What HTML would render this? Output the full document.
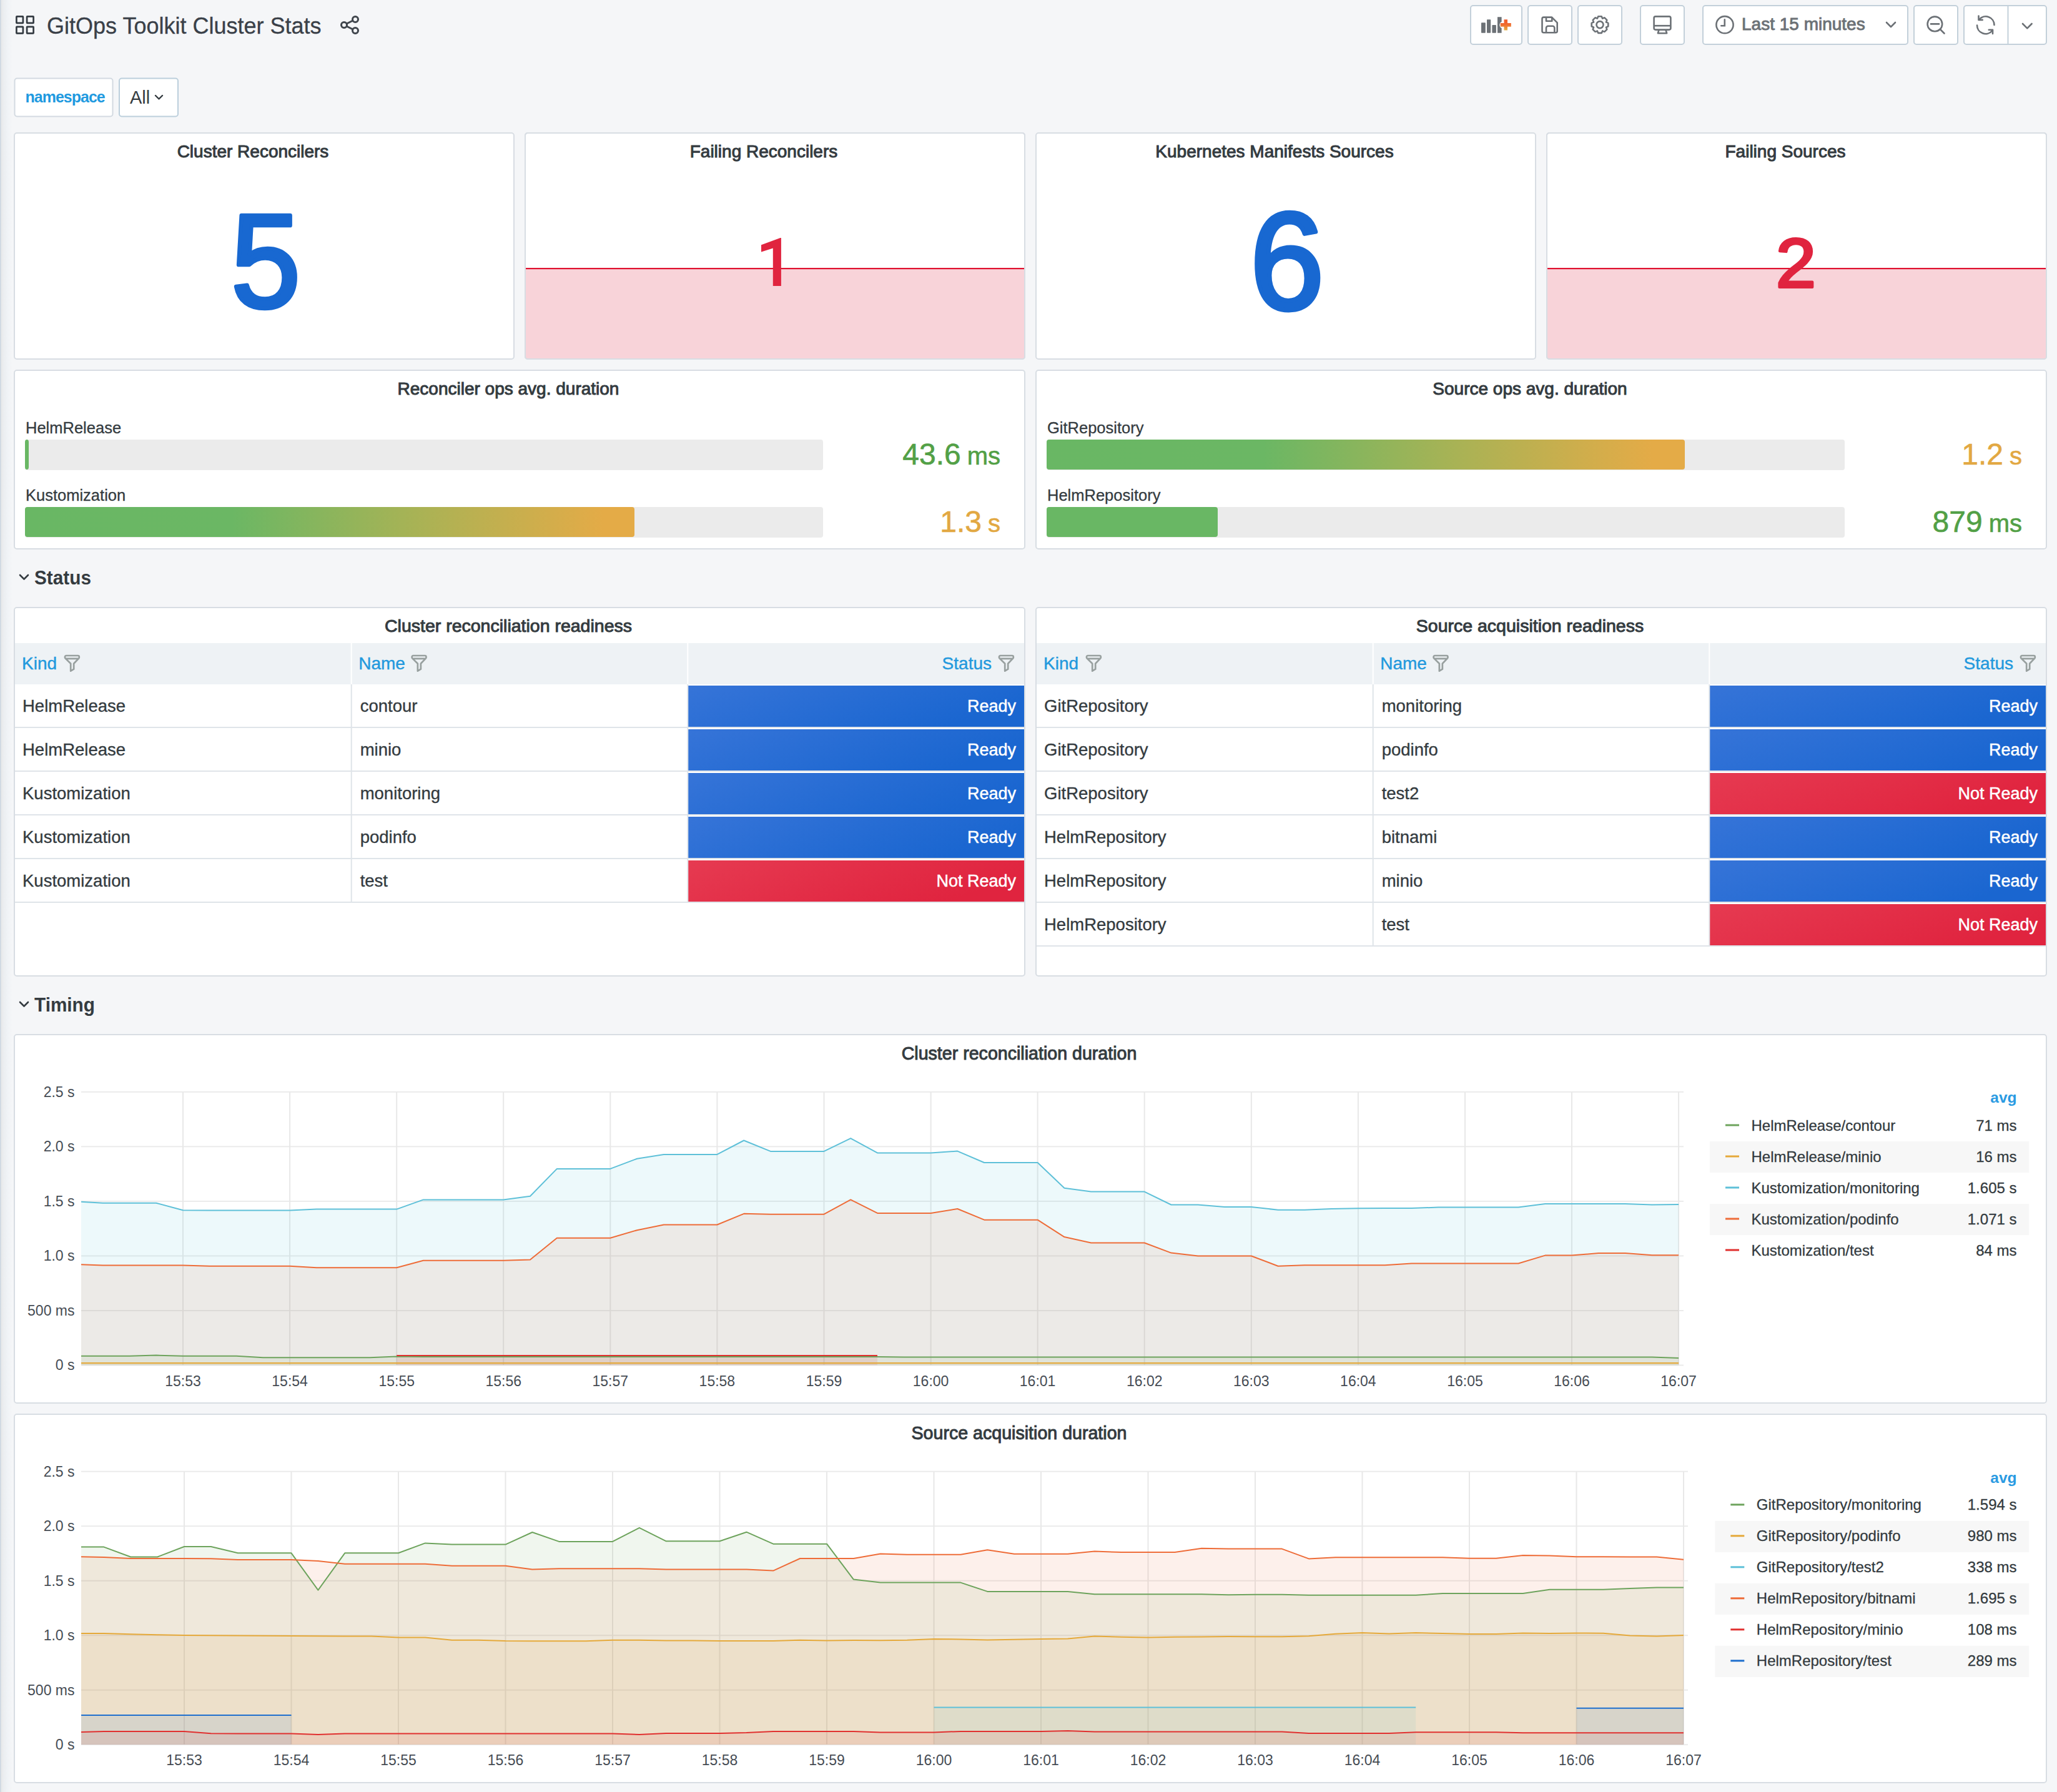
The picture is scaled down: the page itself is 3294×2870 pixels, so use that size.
<!DOCTYPE html>
<html><head><meta charset="utf-8"><style>
html,body{margin:0;padding:0;background:#f5f6f8;width:3294px;height:2870px;overflow:hidden}
svg{display:block}
text{font-family:"Liberation Sans", sans-serif}
</style></head><body>
<svg width="3294" height="2870" viewBox="0 0 3294 2870">
<defs><linearGradient id="lshadow" x1="0" x2="1" y1="0" y2="0"><stop offset="0" stop-color="#c9d4df"/><stop offset="0.07" stop-color="#d5dde5"/><stop offset="0.12" stop-color="#e8e9ea"/><stop offset="0.3" stop-color="#ebeef1"/><stop offset="0.6" stop-color="#f0f3f6"/><stop offset="1" stop-color="#f5f6f8"/></linearGradient><linearGradient id="plusg" x1="0" x2="0" y1="0" y2="1"><stop offset="0" stop-color="#f05a28"/><stop offset="0.45" stop-color="#f0692f"/><stop offset="1" stop-color="#e6b040"/></linearGradient><linearGradient id="bgrad" x1="0" x2="1" y1="0" y2="0"><stop offset="0" stop-color="#69b764"/><stop offset="0.34" stop-color="#6bb764"/><stop offset="0.62" stop-color="#a4b356"/><stop offset="0.95" stop-color="#e4ab47"/><stop offset="1" stop-color="#e4ab47"/></linearGradient><linearGradient id="cblue" x1="0" x2="1" y1="0" y2="0.35"><stop offset="0" stop-color="#3674d8"/><stop offset="1" stop-color="#1a66d0"/></linearGradient><linearGradient id="cred" x1="0" x2="1" y1="0" y2="0.35"><stop offset="0" stop-color="#e63a51"/><stop offset="1" stop-color="#e0243f"/></linearGradient><clipPath id="clip0"><rect x="130" y="1742.8" width="2559" height="443.70000000000005"/></clipPath><clipPath id="clip1"><rect x="130" y="2350.7" width="2566" height="443.5"/></clipPath></defs>
<rect width="3294" height="2870" fill="#f5f6f8"/>
<rect x="0" y="0" width="20" height="2870" fill="url(#lshadow)"/>
<rect x="26.4" y="26.4" width="10.5" height="10.5" fill="none" stroke="#343b42" stroke-width="2.7" rx="0.6"/>
<rect x="43.1" y="26.4" width="10.5" height="10.5" fill="none" stroke="#343b42" stroke-width="2.7" rx="0.6"/>
<rect x="26.4" y="42.8" width="10.5" height="10.5" fill="none" stroke="#343b42" stroke-width="2.7" rx="0.6"/>
<rect x="43.1" y="42.8" width="10.5" height="10.5" fill="none" stroke="#343b42" stroke-width="2.7" rx="0.6"/>
<text x="75" y="54" font-size="36" fill="#3a4048" stroke="#3a4048" stroke-width="0.3">GitOps Toolkit Cluster Stats</text>
<g fill="none" stroke="#3f454c" stroke-width="3"><circle cx="569" cy="31" r="4.5"/><circle cx="551" cy="40" r="4.5"/><circle cx="569" cy="49" r="4.5"/><line x1="555" y1="38" x2="565" y2="33"/><line x1="555" y1="42" x2="565" y2="47"/></g>
<rect x="2355" y="9" width="82" height="62" fill="#ffffff" stroke="#c3d0da" stroke-width="2" rx="4"/>
<rect x="2447" y="9" width="70" height="62" fill="#ffffff" stroke="#c3d0da" stroke-width="2" rx="4"/>
<rect x="2527" y="9" width="70" height="62" fill="#ffffff" stroke="#c3d0da" stroke-width="2" rx="4"/>
<rect x="2627" y="9" width="70" height="62" fill="#ffffff" stroke="#c3d0da" stroke-width="2" rx="4"/>
<rect x="2727" y="9" width="328" height="62" fill="#ffffff" stroke="#c3d0da" stroke-width="2" rx="4"/>
<rect x="3065" y="9" width="70" height="62" fill="#ffffff" stroke="#c3d0da" stroke-width="2" rx="4"/>
<rect x="3145" y="9" width="132" height="62" fill="#ffffff" stroke="#c3d0da" stroke-width="2" rx="4"/>
<line x1="3215.5" y1="9" x2="3215.5" y2="71" stroke="#c3d0da" stroke-width="2"/>
<g fill="#6c7176"><rect x="2372" y="36.2" width="6.8" height="16.5" rx="0.8"/><rect x="2381" y="31.2" width="6.2" height="21.5" rx="0.8"/><rect x="2389.4" y="40.1" width="6.5" height="12.6" rx="0.8"/><path d="M2398 27.2 h6.6 v7.8 a5.5 5.5 0 0 0 0 10 v7.7 h-6.6 z"/></g>
<path fill="url(#plusg)" d="M2408.5 31.2 h5.5 v5.9 h5.8 v5.6 h-5.8 v5.9 h-5.5 v-5.9 h-5.8 v-5.6 h5.8 z"/>
<g fill="none" stroke="#6c7176" stroke-width="2.6" stroke-linejoin="round"><path d="M2472 27.6 h13 l8.7 8.7 v13.5 a2.5 2.5 0 0 1 -2.5 2.5 h-19.2 a2.5 2.5 0 0 1 -2.5 -2.5 v-19.7 a2.5 2.5 0 0 1 2.5 -2.5 z"/><path d="M2476 27.6 v6.2 h9.3 v-6.2"/><path d="M2476 52.3 v-7.5 a3 3 0 0 1 3 -3 h7.3 a3 3 0 0 1 3 3 v7.5"/></g>
<path d="M2557.8 29.7 L2559.3 26.3 L2564.7 26.3 L2566.2 29.7 L2566.1 29.6 L2569.5 28.3 L2573.3 32.1 L2572.0 35.5 L2571.9 35.4 L2575.3 36.9 L2575.3 42.3 L2571.9 43.8 L2572.0 43.7 L2573.3 47.1 L2569.5 50.9 L2566.1 49.6 L2566.2 49.5 L2564.7 52.9 L2559.3 52.9 L2557.8 49.5 L2557.9 49.6 L2554.5 50.9 L2550.7 47.1 L2552.0 43.7 L2552.1 43.8 L2548.7 42.3 L2548.7 36.9 L2552.1 35.4 L2552.0 35.5 L2550.7 32.1 L2554.5 28.3 L2557.9 29.6 Z" fill="none" stroke="#6c7176" stroke-width="2.6" stroke-linejoin="round"/>
<circle cx="2562" cy="39.6" r="5.5" fill="none" stroke="#6c7176" stroke-width="2.6"/>
<g fill="none" stroke="#6c7176" stroke-width="2.6" stroke-linejoin="round"><rect x="2648.6" y="26.4" width="26.8" height="21.2" rx="2.5"/><line x1="2648.6" y1="41.2" x2="2675.4" y2="41.2"/><path d="M2656.5 48 l-1.6 5.2 h14.2 l-1.6 -5.2"/></g>
<g fill="none" stroke="#6c7176" stroke-width="2.6"><circle cx="2762" cy="39.7" r="13.6"/><path d="M2761.8 31.3 v9.9 h-5.5" stroke-linecap="round"/></g>
<text x="2789" y="48" font-size="28" fill="#6c7176" stroke="#6c7176" stroke-width="0.9">Last 15 minutes</text>
<path d="M3021 36 l7 7 l7 -7" fill="none" stroke="#6c7176" stroke-width="2.6" stroke-linecap="round" stroke-linejoin="round"/>
<g fill="none" stroke="#6c7176" stroke-width="2.6" stroke-linecap="round"><circle cx="3098.4" cy="38.4" r="11.8"/><line x1="3107" y1="47" x2="3113.5" y2="53.5"/><line x1="3092" y1="38.4" x2="3105" y2="38.4"/></g>
<g fill="none" stroke="#6c7176" stroke-width="2.6" stroke-linecap="round" stroke-linejoin="round"><path d="M3193.5 40 a13.6 13.6 0 0 0 -24 -8.8"/><path d="M3166 40.5 a13.6 13.6 0 0 0 24 8.8"/><path d="M3168.5 25.6 v6.3 h6.2"/><path d="M3191 54 v-6.3 h-6.2"/></g>
<path d="M3239 38 l7.3 7.3 l7.3 -7.3" fill="none" stroke="#6c7176" stroke-width="2.6" stroke-linecap="round" stroke-linejoin="round"/>
<rect x="23.5" y="125.5" width="157" height="61" fill="#ffffff" stroke="#d3dae1" stroke-width="2" rx="4"/>
<text x="40.5" y="164" font-size="25" fill="#1f9ae0" font-weight="700" letter-spacing="-1">namespace</text>
<rect x="191" y="125.5" width="94" height="61" fill="#ffffff" stroke="#bccfdc" stroke-width="2" rx="4"/>
<text x="208" y="166" font-size="29" fill="#343b40">All</text>
<path d="M249 153 l5.5 5.5 l5.5 -5.5" fill="none" stroke="#343b40" stroke-width="2.4" stroke-linecap="round" stroke-linejoin="round"/>
<rect x="23" y="213" width="800" height="362" fill="#ffffff" stroke="#d8dde3" stroke-width="2" rx="4"/>
<rect x="841" y="213" width="800" height="362" fill="#ffffff" stroke="#d8dde3" stroke-width="2" rx="4"/>
<rect x="1659" y="213" width="800" height="362" fill="#ffffff" stroke="#d8dde3" stroke-width="2" rx="4"/>
<rect x="2477" y="213" width="800" height="362" fill="#ffffff" stroke="#d8dde3" stroke-width="2" rx="4"/>
<rect x="842" y="430" width="798" height="144" fill="#f8d3d9"/>
<rect x="842" y="429" width="798" height="2.2" fill="#e0102f"/>
<rect x="841" y="213" width="800" height="362" fill="none" stroke="#d8dde3" stroke-width="2" rx="4"/>
<rect x="2478" y="430" width="798" height="144" fill="#f8d3d9"/>
<rect x="2478" y="429" width="798" height="2.2" fill="#e0102f"/>
<rect x="2477" y="213" width="800" height="362" fill="none" stroke="#d8dde3" stroke-width="2" rx="4"/>
<text x="405.0" y="252" font-size="28" fill="#343b40" text-anchor="middle" stroke="#343b40" stroke-width="1.0">Cluster Reconcilers</text>
<text x="1223.0" y="252" font-size="28" fill="#343b40" text-anchor="middle" stroke="#343b40" stroke-width="1.0">Failing Reconcilers</text>
<text x="2041.0" y="252" font-size="28" fill="#343b40" text-anchor="middle" stroke="#343b40" stroke-width="1.0">Kubernetes Manifests Sources</text>
<text x="2859.0" y="252" font-size="28" fill="#343b40" text-anchor="middle" stroke="#343b40" stroke-width="1.0">Failing Sources</text>
<text transform="translate(425.5,492) scale(0.965,1.035)" x="0" y="0" font-size="207" fill="#1868d1" stroke="#1868d1" stroke-width="6.5" stroke-linejoin="round" text-anchor="middle">5</text>
<text transform="translate(2061,494.5) scale(1.03,1.065)" x="0" y="0" font-size="207" fill="#1868d1" stroke="#1868d1" stroke-width="6.5" stroke-linejoin="round" text-anchor="middle">6</text>
<polygon points="1250.9,381 1250.9,458 1237.8,458 1237.8,397.5 1219,403.5 1219,392.2 1249.5,381" fill="#e0243f"/>
<text transform="translate(2876,459.5) scale(1.08,1.04)" x="0" y="0" font-size="107" fill="#e0243f" stroke="#e0243f" stroke-width="4" stroke-linejoin="round" text-anchor="middle">2</text>
<rect x="23" y="593" width="1618" height="286" fill="#ffffff" stroke="#d8dde3" stroke-width="2" rx="4"/>
<rect x="1659" y="593" width="1618" height="286" fill="#ffffff" stroke="#d8dde3" stroke-width="2" rx="4"/>
<text x="814" y="632" font-size="28" fill="#343b40" text-anchor="middle" stroke="#343b40" stroke-width="1.0">Reconciler ops avg. duration</text>
<text x="2450" y="632" font-size="28" fill="#343b40" text-anchor="middle" stroke="#343b40" stroke-width="1.0">Source ops avg. duration</text>
<text x="41" y="694" font-size="25.5" fill="#343b40" stroke="#343b40" stroke-width="0.3">HelmRelease</text>
<rect x="40" y="704" width="1278" height="49" fill="#ebebeb" rx="4"/>
<rect x="40" y="704" width="6" height="48" fill="#69b764" rx="4"/>
<text x="1602" y="744" text-anchor="end" fill="#52a046" stroke="#52a046" stroke-width="0.6" font-size="48">43.6<tspan font-size="40" dx="10">ms</tspan></text>
<text x="41" y="802" font-size="25.5" fill="#343b40" stroke="#343b40" stroke-width="0.3">Kustomization</text>
<rect x="40" y="812" width="1278" height="49" fill="#ebebeb" rx="4"/>
<rect x="40" y="812" width="976" height="48" fill="url(#bgrad)" rx="4"/>
<text x="1602" y="852" text-anchor="end" fill="#e2a842" stroke="#e2a842" stroke-width="0.6" font-size="48">1.3<tspan font-size="40" dx="10">s</tspan></text>
<text x="1677" y="694" font-size="25.5" fill="#343b40" stroke="#343b40" stroke-width="0.3">GitRepository</text>
<rect x="1676" y="704" width="1278" height="49" fill="#ebebeb" rx="4"/>
<rect x="1676" y="704" width="1022" height="48" fill="url(#bgrad)" rx="4"/>
<text x="3238" y="744" text-anchor="end" fill="#e2a842" stroke="#e2a842" stroke-width="0.6" font-size="48">1.2<tspan font-size="40" dx="10">s</tspan></text>
<text x="1677" y="802" font-size="25.5" fill="#343b40" stroke="#343b40" stroke-width="0.3">HelmRepository</text>
<rect x="1676" y="812" width="1278" height="49" fill="#ebebeb" rx="4"/>
<rect x="1676" y="812" width="274" height="48" fill="#69b764" rx="4"/>
<text x="3238" y="852" text-anchor="end" fill="#52a046" stroke="#52a046" stroke-width="0.6" font-size="48">879<tspan font-size="40" dx="10">ms</tspan></text>
<rect x="23" y="973" width="1618" height="590" fill="#ffffff" stroke="#d8dde3" stroke-width="2" rx="4"/>
<text x="814" y="1012" font-size="28.5" fill="#343b40" text-anchor="middle" stroke="#343b40" stroke-width="1.0">Cluster reconciliation readiness</text>
<rect x="24" y="1030" width="1616" height="66" fill="#eef2f5"/>
<rect x="561.7" y="1030" width="2" height="66" fill="#ffffff"/>
<rect x="1100.3" y="1030" width="2" height="66" fill="#ffffff"/>
<text x="35" y="1072" font-size="28" fill="#2299dd" stroke="#2299dd" stroke-width="0.4">Kind</text>
<path transform="translate(103,1048.5)" d="M3 1.5 h18.8 a2 2 0 0 1 2 2 v1 a2 2 0 0 1 -0.6 1.4 l-8 8.3 v9 l-5 3 v-12 l-8.6 -8.3 a2 2 0 0 1 -0.6 -1.4 v-1 a2 2 0 0 1 2 -2 z M1.6 6.3 h22" fill="none" stroke="#98a09f" stroke-width="2.7" stroke-linejoin="round"/>
<text x="574.1666666666666" y="1072" font-size="28" fill="#2299dd" stroke="#2299dd" stroke-width="0.4">Name</text>
<path transform="translate(658.6666666666666,1048.5)" d="M3 1.5 h18.8 a2 2 0 0 1 2 2 v1 a2 2 0 0 1 -0.6 1.4 l-8 8.3 v9 l-5 3 v-12 l-8.6 -8.3 a2 2 0 0 1 -0.6 -1.4 v-1 a2 2 0 0 1 2 -2 z M1.6 6.3 h22" fill="none" stroke="#98a09f" stroke-width="2.7" stroke-linejoin="round"/>
<text x="1588" y="1072" font-size="28" fill="#2299dd" text-anchor="end" stroke="#2299dd" stroke-width="0.4">Status</text>
<path transform="translate(1599,1048.5)" d="M3 1.5 h18.8 a2 2 0 0 1 2 2 v1 a2 2 0 0 1 -0.6 1.4 l-8 8.3 v9 l-5 3 v-12 l-8.6 -8.3 a2 2 0 0 1 -0.6 -1.4 v-1 a2 2 0 0 1 2 -2 z M1.6 6.3 h22" fill="none" stroke="#98a09f" stroke-width="2.7" stroke-linejoin="round"/>
<rect x="24" y="1164" width="1616" height="2" fill="#dfe4e9"/>
<text x="36" y="1140" font-size="27.5" fill="#343b40" stroke="#343b40" stroke-width="0.35">HelmRelease</text>
<text x="576.6666666666666" y="1140" font-size="27.5" fill="#343b40" stroke="#343b40" stroke-width="0.35">contour</text>
<rect x="1101.3" y="1098" width="538.7" height="66" fill="url(#cblue)"/>
<text x="1627" y="1140" font-size="27" fill="#ffffff" text-anchor="end" stroke="#ffffff" stroke-width="0.5">Ready</text>
<rect x="24" y="1234" width="1616" height="2" fill="#dfe4e9"/>
<text x="36" y="1210" font-size="27.5" fill="#343b40" stroke="#343b40" stroke-width="0.35">HelmRelease</text>
<text x="576.6666666666666" y="1210" font-size="27.5" fill="#343b40" stroke="#343b40" stroke-width="0.35">minio</text>
<rect x="1101.3" y="1168" width="538.7" height="66" fill="url(#cblue)"/>
<text x="1627" y="1210" font-size="27" fill="#ffffff" text-anchor="end" stroke="#ffffff" stroke-width="0.5">Ready</text>
<rect x="24" y="1304" width="1616" height="2" fill="#dfe4e9"/>
<text x="36" y="1280" font-size="27.5" fill="#343b40" stroke="#343b40" stroke-width="0.35">Kustomization</text>
<text x="576.6666666666666" y="1280" font-size="27.5" fill="#343b40" stroke="#343b40" stroke-width="0.35">monitoring</text>
<rect x="1101.3" y="1238" width="538.7" height="66" fill="url(#cblue)"/>
<text x="1627" y="1280" font-size="27" fill="#ffffff" text-anchor="end" stroke="#ffffff" stroke-width="0.5">Ready</text>
<rect x="24" y="1374" width="1616" height="2" fill="#dfe4e9"/>
<text x="36" y="1350" font-size="27.5" fill="#343b40" stroke="#343b40" stroke-width="0.35">Kustomization</text>
<text x="576.6666666666666" y="1350" font-size="27.5" fill="#343b40" stroke="#343b40" stroke-width="0.35">podinfo</text>
<rect x="1101.3" y="1308" width="538.7" height="66" fill="url(#cblue)"/>
<text x="1627" y="1350" font-size="27" fill="#ffffff" text-anchor="end" stroke="#ffffff" stroke-width="0.5">Ready</text>
<rect x="24" y="1444" width="1616" height="2" fill="#dfe4e9"/>
<text x="36" y="1420" font-size="27.5" fill="#343b40" stroke="#343b40" stroke-width="0.35">Kustomization</text>
<text x="576.6666666666666" y="1420" font-size="27.5" fill="#343b40" stroke="#343b40" stroke-width="0.35">test</text>
<rect x="1101.3" y="1378" width="538.7" height="66" fill="url(#cred)"/>
<text x="1627" y="1420" font-size="27" fill="#ffffff" text-anchor="end" stroke="#ffffff" stroke-width="0.5">Not Ready</text>
<rect x="561.7" y="1096" width="2" height="350" fill="#dfe4e9"/>
<rect x="1100.3" y="1096" width="2" height="350" fill="#dfe4e9"/>
<rect x="1659" y="973" width="1618" height="590" fill="#ffffff" stroke="#d8dde3" stroke-width="2" rx="4"/>
<text x="2450" y="1012" font-size="28.5" fill="#343b40" text-anchor="middle" stroke="#343b40" stroke-width="1.0">Source acquisition readiness</text>
<rect x="1660" y="1030" width="1616" height="66" fill="#eef2f5"/>
<rect x="2197.7" y="1030" width="2" height="66" fill="#ffffff"/>
<rect x="2736.3" y="1030" width="2" height="66" fill="#ffffff"/>
<text x="1671" y="1072" font-size="28" fill="#2299dd" stroke="#2299dd" stroke-width="0.4">Kind</text>
<path transform="translate(1739,1048.5)" d="M3 1.5 h18.8 a2 2 0 0 1 2 2 v1 a2 2 0 0 1 -0.6 1.4 l-8 8.3 v9 l-5 3 v-12 l-8.6 -8.3 a2 2 0 0 1 -0.6 -1.4 v-1 a2 2 0 0 1 2 -2 z M1.6 6.3 h22" fill="none" stroke="#98a09f" stroke-width="2.7" stroke-linejoin="round"/>
<text x="2210.1666666666665" y="1072" font-size="28" fill="#2299dd" stroke="#2299dd" stroke-width="0.4">Name</text>
<path transform="translate(2294.6666666666665,1048.5)" d="M3 1.5 h18.8 a2 2 0 0 1 2 2 v1 a2 2 0 0 1 -0.6 1.4 l-8 8.3 v9 l-5 3 v-12 l-8.6 -8.3 a2 2 0 0 1 -0.6 -1.4 v-1 a2 2 0 0 1 2 -2 z M1.6 6.3 h22" fill="none" stroke="#98a09f" stroke-width="2.7" stroke-linejoin="round"/>
<text x="3224" y="1072" font-size="28" fill="#2299dd" text-anchor="end" stroke="#2299dd" stroke-width="0.4">Status</text>
<path transform="translate(3235,1048.5)" d="M3 1.5 h18.8 a2 2 0 0 1 2 2 v1 a2 2 0 0 1 -0.6 1.4 l-8 8.3 v9 l-5 3 v-12 l-8.6 -8.3 a2 2 0 0 1 -0.6 -1.4 v-1 a2 2 0 0 1 2 -2 z M1.6 6.3 h22" fill="none" stroke="#98a09f" stroke-width="2.7" stroke-linejoin="round"/>
<rect x="1660" y="1164" width="1616" height="2" fill="#dfe4e9"/>
<text x="1672" y="1140" font-size="27.5" fill="#343b40" stroke="#343b40" stroke-width="0.35">GitRepository</text>
<text x="2212.6666666666665" y="1140" font-size="27.5" fill="#343b40" stroke="#343b40" stroke-width="0.35">monitoring</text>
<rect x="2737.3" y="1098" width="538.7" height="66" fill="url(#cblue)"/>
<text x="3263" y="1140" font-size="27" fill="#ffffff" text-anchor="end" stroke="#ffffff" stroke-width="0.5">Ready</text>
<rect x="1660" y="1234" width="1616" height="2" fill="#dfe4e9"/>
<text x="1672" y="1210" font-size="27.5" fill="#343b40" stroke="#343b40" stroke-width="0.35">GitRepository</text>
<text x="2212.6666666666665" y="1210" font-size="27.5" fill="#343b40" stroke="#343b40" stroke-width="0.35">podinfo</text>
<rect x="2737.3" y="1168" width="538.7" height="66" fill="url(#cblue)"/>
<text x="3263" y="1210" font-size="27" fill="#ffffff" text-anchor="end" stroke="#ffffff" stroke-width="0.5">Ready</text>
<rect x="1660" y="1304" width="1616" height="2" fill="#dfe4e9"/>
<text x="1672" y="1280" font-size="27.5" fill="#343b40" stroke="#343b40" stroke-width="0.35">GitRepository</text>
<text x="2212.6666666666665" y="1280" font-size="27.5" fill="#343b40" stroke="#343b40" stroke-width="0.35">test2</text>
<rect x="2737.3" y="1238" width="538.7" height="66" fill="url(#cred)"/>
<text x="3263" y="1280" font-size="27" fill="#ffffff" text-anchor="end" stroke="#ffffff" stroke-width="0.5">Not Ready</text>
<rect x="1660" y="1374" width="1616" height="2" fill="#dfe4e9"/>
<text x="1672" y="1350" font-size="27.5" fill="#343b40" stroke="#343b40" stroke-width="0.35">HelmRepository</text>
<text x="2212.6666666666665" y="1350" font-size="27.5" fill="#343b40" stroke="#343b40" stroke-width="0.35">bitnami</text>
<rect x="2737.3" y="1308" width="538.7" height="66" fill="url(#cblue)"/>
<text x="3263" y="1350" font-size="27" fill="#ffffff" text-anchor="end" stroke="#ffffff" stroke-width="0.5">Ready</text>
<rect x="1660" y="1444" width="1616" height="2" fill="#dfe4e9"/>
<text x="1672" y="1420" font-size="27.5" fill="#343b40" stroke="#343b40" stroke-width="0.35">HelmRepository</text>
<text x="2212.6666666666665" y="1420" font-size="27.5" fill="#343b40" stroke="#343b40" stroke-width="0.35">minio</text>
<rect x="2737.3" y="1378" width="538.7" height="66" fill="url(#cblue)"/>
<text x="3263" y="1420" font-size="27" fill="#ffffff" text-anchor="end" stroke="#ffffff" stroke-width="0.5">Ready</text>
<rect x="1660" y="1514" width="1616" height="2" fill="#dfe4e9"/>
<text x="1672" y="1490" font-size="27.5" fill="#343b40" stroke="#343b40" stroke-width="0.35">HelmRepository</text>
<text x="2212.6666666666665" y="1490" font-size="27.5" fill="#343b40" stroke="#343b40" stroke-width="0.35">test</text>
<rect x="2737.3" y="1448" width="538.7" height="66" fill="url(#cred)"/>
<text x="3263" y="1490" font-size="27" fill="#ffffff" text-anchor="end" stroke="#ffffff" stroke-width="0.5">Not Ready</text>
<rect x="2197.7" y="1096" width="2" height="420" fill="#dfe4e9"/>
<rect x="2736.3" y="1096" width="2" height="420" fill="#dfe4e9"/>
<path d="M32 921 l6.5 6.5 l6.5 -6.5" fill="none" stroke="#343b40" stroke-width="2.6" stroke-linecap="round" stroke-linejoin="round"/>
<text transform="translate(55,936) scale(0.93,1)" x="0" y="0" font-size="32" font-weight="700" fill="#343b40">Status</text>
<path d="M32 1605 l6.5 6.5 l6.5 -6.5" fill="none" stroke="#343b40" stroke-width="2.6" stroke-linecap="round" stroke-linejoin="round"/>
<text transform="translate(55,1620) scale(0.93,1)" x="0" y="0" font-size="32" font-weight="700" fill="#343b40">Timing</text>
<rect x="23" y="1657" width="3254" height="590" fill="#ffffff" stroke="#d8dde3" stroke-width="2" rx="4"/>
<text x="1632" y="1696.5" font-size="28.6" fill="#343b40" text-anchor="middle" stroke="#343b40" stroke-width="1.0">Cluster reconciliation duration</text>
<rect x="130" y="1747.8" width="2566" height="2" fill="#ebebeb"/><rect x="130" y="1835.3" width="2566" height="2" fill="#ebebeb"/><rect x="130" y="1922.9" width="2566" height="2" fill="#ebebeb"/><rect x="130" y="2010.4" width="2566" height="2" fill="#ebebeb"/><rect x="130" y="2098.0" width="2566" height="2" fill="#ebebeb"/><rect x="130" y="2185.5" width="2566" height="2" fill="#ebebeb"/><rect x="292.0" y="1748.8" width="2" height="437.7" fill="#e8e8e8"/><rect x="463.1" y="1748.8" width="2" height="437.7" fill="#e8e8e8"/><rect x="634.2" y="1748.8" width="2" height="437.7" fill="#e8e8e8"/><rect x="805.2" y="1748.8" width="2" height="437.7" fill="#e8e8e8"/><rect x="976.3" y="1748.8" width="2" height="437.7" fill="#e8e8e8"/><rect x="1147.4" y="1748.8" width="2" height="437.7" fill="#e8e8e8"/><rect x="1318.5" y="1748.8" width="2" height="437.7" fill="#e8e8e8"/><rect x="1489.6" y="1748.8" width="2" height="437.7" fill="#e8e8e8"/><rect x="1660.6" y="1748.8" width="2" height="437.7" fill="#e8e8e8"/><rect x="1831.7" y="1748.8" width="2" height="437.7" fill="#e8e8e8"/><rect x="2002.8" y="1748.8" width="2" height="437.7" fill="#e8e8e8"/><rect x="2173.9" y="1748.8" width="2" height="437.7" fill="#e8e8e8"/><rect x="2345.0" y="1748.8" width="2" height="437.7" fill="#e8e8e8"/><rect x="2516.0" y="1748.8" width="2" height="437.7" fill="#e8e8e8"/><rect x="2687.1" y="1748.8" width="2" height="437.7" fill="#e8e8e8"/>
<text x="119.5" y="1756.6" font-size="23" fill="#464c54" text-anchor="end">2.5 s</text>
<text x="119.5" y="1844.1" font-size="23" fill="#464c54" text-anchor="end">2.0 s</text>
<text x="119.5" y="1931.7" font-size="23" fill="#464c54" text-anchor="end">1.5 s</text>
<text x="119.5" y="2019.2" font-size="23" fill="#464c54" text-anchor="end">1.0 s</text>
<text x="119.5" y="2106.8" font-size="23" fill="#464c54" text-anchor="end">500 ms</text>
<text x="119.5" y="2194.3" font-size="23" fill="#464c54" text-anchor="end">0 s</text>
<text x="293.0" y="2220" font-size="23" fill="#464c54" text-anchor="middle">15:53</text>
<text x="464.1" y="2220" font-size="23" fill="#464c54" text-anchor="middle">15:54</text>
<text x="635.2" y="2220" font-size="23" fill="#464c54" text-anchor="middle">15:55</text>
<text x="806.2" y="2220" font-size="23" fill="#464c54" text-anchor="middle">15:56</text>
<text x="977.3" y="2220" font-size="23" fill="#464c54" text-anchor="middle">15:57</text>
<text x="1148.4" y="2220" font-size="23" fill="#464c54" text-anchor="middle">15:58</text>
<text x="1319.5" y="2220" font-size="23" fill="#464c54" text-anchor="middle">15:59</text>
<text x="1490.6" y="2220" font-size="23" fill="#464c54" text-anchor="middle">16:00</text>
<text x="1661.6" y="2220" font-size="23" fill="#464c54" text-anchor="middle">16:01</text>
<text x="1832.7" y="2220" font-size="23" fill="#464c54" text-anchor="middle">16:02</text>
<text x="2003.8" y="2220" font-size="23" fill="#464c54" text-anchor="middle">16:03</text>
<text x="2174.9" y="2220" font-size="23" fill="#464c54" text-anchor="middle">16:04</text>
<text x="2346.0" y="2220" font-size="23" fill="#464c54" text-anchor="middle">16:05</text>
<text x="2517.0" y="2220" font-size="23" fill="#464c54" text-anchor="middle">16:06</text>
<text x="2688.1" y="2220" font-size="23" fill="#464c54" text-anchor="middle">16:07</text>
<g clip-path="url(#clip0)"><polygon points="121.9,2186.5 121.9,2171.8 164.7,2171.8 207.5,2171.8 250.2,2170.6 293.0,2171.8 335.8,2171.8 378.5,2171.8 421.3,2174.3 464.1,2174.3 506.9,2174.3 549.6,2174.3 592.4,2174.3 635.2,2172.5 677.9,2173.0 720.7,2173.0 763.5,2173.0 806.2,2173.0 849.0,2173.0 891.8,2173.0 934.6,2173.0 977.3,2173.0 1020.1,2173.0 1062.9,2173.0 1105.6,2173.0 1148.4,2173.0 1191.2,2173.0 1233.9,2173.0 1276.7,2173.0 1319.5,2173.0 1362.2,2173.0 1405.0,2173.0 1447.8,2173.5 1490.6,2173.5 1533.3,2173.5 1576.1,2173.5 1618.9,2173.5 1661.6,2173.5 1704.4,2173.5 1747.2,2173.5 1790.0,2173.5 1832.7,2173.5 1875.5,2173.5 1918.3,2173.5 1961.0,2173.5 2003.8,2173.5 2046.6,2173.5 2089.3,2173.5 2132.1,2173.5 2174.9,2173.5 2217.7,2173.5 2260.4,2173.5 2303.2,2173.5 2346.0,2173.5 2388.7,2173.5 2431.5,2173.5 2474.3,2173.5 2517.0,2173.5 2559.8,2173.5 2602.6,2173.5 2645.4,2173.5 2688.1,2175.0 2688.1,2186.5" fill="#6da35c" fill-opacity="0.1"/><polygon points="121.9,2186.5 121.9,2183.0 164.7,2183.0 207.5,2183.0 250.2,2183.0 293.0,2183.0 335.8,2183.0 378.5,2183.0 421.3,2183.0 464.1,2183.0 506.9,2183.0 549.6,2183.0 592.4,2183.0 635.2,2183.0 677.9,2183.0 720.7,2183.0 763.5,2183.0 806.2,2183.0 849.0,2183.0 891.8,2183.0 934.6,2183.0 977.3,2183.0 1020.1,2183.0 1062.9,2183.0 1105.6,2183.0 1148.4,2183.0 1191.2,2183.0 1233.9,2183.0 1276.7,2183.0 1319.5,2183.0 1362.2,2183.0 1405.0,2183.0 1447.8,2183.0 1490.6,2183.0 1533.3,2183.0 1576.1,2183.0 1618.9,2183.0 1661.6,2183.0 1704.4,2183.0 1747.2,2183.0 1790.0,2183.0 1832.7,2183.0 1875.5,2183.0 1918.3,2183.0 1961.0,2183.0 2003.8,2183.0 2046.6,2183.0 2089.3,2183.0 2132.1,2183.0 2174.9,2183.0 2217.7,2183.0 2260.4,2183.0 2303.2,2183.0 2346.0,2183.0 2388.7,2183.0 2431.5,2183.0 2474.3,2183.0 2517.0,2183.0 2559.8,2183.0 2602.6,2183.0 2645.4,2183.0 2688.1,2183.0 2688.1,2186.5" fill="#e5a93a" fill-opacity="0.1"/><polygon points="121.9,2186.5 121.9,1924.3 164.7,1926.7 207.5,1926.7 250.2,1926.7 293.0,1938.2 335.8,1938.5 378.5,1938.5 421.3,1938.5 464.1,1938.5 506.9,1936.6 549.6,1936.6 592.4,1936.6 635.2,1936.6 677.9,1921.4 720.7,1921.4 763.5,1921.4 806.2,1921.4 849.0,1915.8 891.8,1871.9 934.6,1871.9 977.3,1871.9 1020.1,1855.7 1062.9,1848.9 1105.6,1848.9 1148.4,1848.9 1191.2,1826.5 1233.9,1843.9 1276.7,1843.9 1319.5,1843.9 1362.2,1823.1 1405.0,1846.4 1447.8,1846.4 1490.6,1846.4 1533.3,1843.6 1576.1,1862.0 1618.9,1862.0 1661.6,1862.0 1704.4,1902.7 1747.2,1908.6 1790.0,1908.6 1832.7,1908.6 1875.5,1929.5 1918.3,1929.5 1961.0,1932.9 2003.8,1932.9 2046.6,1937.8 2089.3,1937.8 2132.1,1936.0 2174.9,1935.3 2217.7,1935.0 2260.4,1935.0 2303.2,1933.6 2346.0,1933.6 2388.7,1933.6 2431.5,1933.6 2474.3,1928.0 2517.0,1928.0 2559.8,1928.0 2602.6,1928.0 2645.4,1929.4 2688.1,1929.0 2688.1,2186.5" fill="#4cc8d8" fill-opacity="0.1"/><polygon points="121.9,2186.5 121.9,2025.0 164.7,2026.5 207.5,2026.5 250.2,2026.5 293.0,2026.5 335.8,2027.8 378.5,2027.8 421.3,2027.8 464.1,2027.8 506.9,2030.3 549.6,2030.3 592.4,2030.3 635.2,2030.3 677.9,2018.8 720.7,2018.8 763.5,2018.8 806.2,2018.8 849.0,2017.5 891.8,1982.7 934.6,1982.7 977.3,1982.7 1020.1,1970.2 1062.9,1961.5 1105.6,1961.5 1148.4,1961.5 1191.2,1943.8 1233.9,1944.7 1276.7,1944.7 1319.5,1944.7 1362.2,1921.4 1405.0,1942.9 1447.8,1942.9 1490.6,1942.9 1533.3,1936.0 1576.1,1953.7 1618.9,1953.7 1661.6,1953.7 1704.4,1981.1 1747.2,1990.5 1790.0,1990.5 1832.7,1990.5 1875.5,2006.6 1918.3,2011.6 1961.0,2011.6 2003.8,2011.5 2046.6,2027.7 2089.3,2026.3 2132.1,2026.3 2174.9,2026.3 2217.7,2026.3 2260.4,2023.5 2303.2,2023.5 2346.0,2023.5 2388.7,2023.5 2431.5,2023.5 2474.3,2010.6 2517.0,2010.6 2559.8,2007.1 2602.6,2007.1 2645.4,2010.2 2688.1,2010.2 2688.1,2186.5" fill="#ee6c38" fill-opacity="0.1"/><polygon points="635.2,2186.5 635.2,2170.9 677.9,2170.9 720.7,2170.9 763.5,2170.9 806.2,2170.9 849.0,2170.9 891.8,2170.9 934.6,2170.9 977.3,2170.9 1020.1,2170.9 1062.9,2170.9 1105.6,2170.9 1148.4,2170.9 1191.2,2170.9 1233.9,2170.9 1276.7,2170.9 1319.5,2170.9 1362.2,2170.9 1405.0,2170.9 1405.0,2186.5" fill="#e0302f" fill-opacity="0.1"/><polyline points="121.9,2171.8 164.7,2171.8 207.5,2171.8 250.2,2170.6 293.0,2171.8 335.8,2171.8 378.5,2171.8 421.3,2174.3 464.1,2174.3 506.9,2174.3 549.6,2174.3 592.4,2174.3 635.2,2172.5 677.9,2173.0 720.7,2173.0 763.5,2173.0 806.2,2173.0 849.0,2173.0 891.8,2173.0 934.6,2173.0 977.3,2173.0 1020.1,2173.0 1062.9,2173.0 1105.6,2173.0 1148.4,2173.0 1191.2,2173.0 1233.9,2173.0 1276.7,2173.0 1319.5,2173.0 1362.2,2173.0 1405.0,2173.0 1447.8,2173.5 1490.6,2173.5 1533.3,2173.5 1576.1,2173.5 1618.9,2173.5 1661.6,2173.5 1704.4,2173.5 1747.2,2173.5 1790.0,2173.5 1832.7,2173.5 1875.5,2173.5 1918.3,2173.5 1961.0,2173.5 2003.8,2173.5 2046.6,2173.5 2089.3,2173.5 2132.1,2173.5 2174.9,2173.5 2217.7,2173.5 2260.4,2173.5 2303.2,2173.5 2346.0,2173.5 2388.7,2173.5 2431.5,2173.5 2474.3,2173.5 2517.0,2173.5 2559.8,2173.5 2602.6,2173.5 2645.4,2173.5 2688.1,2175.0" fill="none" stroke="#6da35c" stroke-width="2" stroke-linejoin="round"/><polyline points="121.9,2183.0 164.7,2183.0 207.5,2183.0 250.2,2183.0 293.0,2183.0 335.8,2183.0 378.5,2183.0 421.3,2183.0 464.1,2183.0 506.9,2183.0 549.6,2183.0 592.4,2183.0 635.2,2183.0 677.9,2183.0 720.7,2183.0 763.5,2183.0 806.2,2183.0 849.0,2183.0 891.8,2183.0 934.6,2183.0 977.3,2183.0 1020.1,2183.0 1062.9,2183.0 1105.6,2183.0 1148.4,2183.0 1191.2,2183.0 1233.9,2183.0 1276.7,2183.0 1319.5,2183.0 1362.2,2183.0 1405.0,2183.0 1447.8,2183.0 1490.6,2183.0 1533.3,2183.0 1576.1,2183.0 1618.9,2183.0 1661.6,2183.0 1704.4,2183.0 1747.2,2183.0 1790.0,2183.0 1832.7,2183.0 1875.5,2183.0 1918.3,2183.0 1961.0,2183.0 2003.8,2183.0 2046.6,2183.0 2089.3,2183.0 2132.1,2183.0 2174.9,2183.0 2217.7,2183.0 2260.4,2183.0 2303.2,2183.0 2346.0,2183.0 2388.7,2183.0 2431.5,2183.0 2474.3,2183.0 2517.0,2183.0 2559.8,2183.0 2602.6,2183.0 2645.4,2183.0 2688.1,2183.0" fill="none" stroke="#e5a93a" stroke-width="2" stroke-linejoin="round"/><polyline points="121.9,1924.3 164.7,1926.7 207.5,1926.7 250.2,1926.7 293.0,1938.2 335.8,1938.5 378.5,1938.5 421.3,1938.5 464.1,1938.5 506.9,1936.6 549.6,1936.6 592.4,1936.6 635.2,1936.6 677.9,1921.4 720.7,1921.4 763.5,1921.4 806.2,1921.4 849.0,1915.8 891.8,1871.9 934.6,1871.9 977.3,1871.9 1020.1,1855.7 1062.9,1848.9 1105.6,1848.9 1148.4,1848.9 1191.2,1826.5 1233.9,1843.9 1276.7,1843.9 1319.5,1843.9 1362.2,1823.1 1405.0,1846.4 1447.8,1846.4 1490.6,1846.4 1533.3,1843.6 1576.1,1862.0 1618.9,1862.0 1661.6,1862.0 1704.4,1902.7 1747.2,1908.6 1790.0,1908.6 1832.7,1908.6 1875.5,1929.5 1918.3,1929.5 1961.0,1932.9 2003.8,1932.9 2046.6,1937.8 2089.3,1937.8 2132.1,1936.0 2174.9,1935.3 2217.7,1935.0 2260.4,1935.0 2303.2,1933.6 2346.0,1933.6 2388.7,1933.6 2431.5,1933.6 2474.3,1928.0 2517.0,1928.0 2559.8,1928.0 2602.6,1928.0 2645.4,1929.4 2688.1,1929.0" fill="none" stroke="#5ec0d8" stroke-width="2" stroke-linejoin="round"/><polyline points="121.9,2025.0 164.7,2026.5 207.5,2026.5 250.2,2026.5 293.0,2026.5 335.8,2027.8 378.5,2027.8 421.3,2027.8 464.1,2027.8 506.9,2030.3 549.6,2030.3 592.4,2030.3 635.2,2030.3 677.9,2018.8 720.7,2018.8 763.5,2018.8 806.2,2018.8 849.0,2017.5 891.8,1982.7 934.6,1982.7 977.3,1982.7 1020.1,1970.2 1062.9,1961.5 1105.6,1961.5 1148.4,1961.5 1191.2,1943.8 1233.9,1944.7 1276.7,1944.7 1319.5,1944.7 1362.2,1921.4 1405.0,1942.9 1447.8,1942.9 1490.6,1942.9 1533.3,1936.0 1576.1,1953.7 1618.9,1953.7 1661.6,1953.7 1704.4,1981.1 1747.2,1990.5 1790.0,1990.5 1832.7,1990.5 1875.5,2006.6 1918.3,2011.6 1961.0,2011.6 2003.8,2011.5 2046.6,2027.7 2089.3,2026.3 2132.1,2026.3 2174.9,2026.3 2217.7,2026.3 2260.4,2023.5 2303.2,2023.5 2346.0,2023.5 2388.7,2023.5 2431.5,2023.5 2474.3,2010.6 2517.0,2010.6 2559.8,2007.1 2602.6,2007.1 2645.4,2010.2 2688.1,2010.2" fill="none" stroke="#ee6c38" stroke-width="2" stroke-linejoin="round"/><polyline points="635.2,2170.9 677.9,2170.9 720.7,2170.9 763.5,2170.9 806.2,2170.9 849.0,2170.9 891.8,2170.9 934.6,2170.9 977.3,2170.9 1020.1,2170.9 1062.9,2170.9 1105.6,2170.9 1148.4,2170.9 1191.2,2170.9 1233.9,2170.9 1276.7,2170.9 1319.5,2170.9 1362.2,2170.9 1405.0,2170.9" fill="none" stroke="#e0302f" stroke-width="2" stroke-linejoin="round"/></g>
<text x="3229.5" y="1766" font-size="24.5" fill="#2b9be2" text-anchor="end" font-weight="700">avg</text>
<rect x="2763" y="1800.5" width="22" height="3" fill="#6da35c"/>
<text x="2804.5" y="1810.6" font-size="24" fill="#343b40" stroke="#343b40" stroke-width="0.3">HelmRelease/contour</text>
<text x="3229.5" y="1810.6" font-size="24" fill="#343b40" text-anchor="end" stroke="#343b40" stroke-width="0.3">71 ms</text>
<rect x="2738" y="1828" width="511.3000000000002" height="50" fill="#f7f7f7"/>
<rect x="2763" y="1850.5" width="22" height="3" fill="#e5a93a"/>
<text x="2804.5" y="1860.6" font-size="24" fill="#343b40" stroke="#343b40" stroke-width="0.3">HelmRelease/minio</text>
<text x="3229.5" y="1860.6" font-size="24" fill="#343b40" text-anchor="end" stroke="#343b40" stroke-width="0.3">16 ms</text>
<rect x="2763" y="1900.5" width="22" height="3" fill="#5ec0d8"/>
<text x="2804.5" y="1910.6" font-size="24" fill="#343b40" stroke="#343b40" stroke-width="0.3">Kustomization/monitoring</text>
<text x="3229.5" y="1910.6" font-size="24" fill="#343b40" text-anchor="end" stroke="#343b40" stroke-width="0.3">1.605 s</text>
<rect x="2738" y="1928" width="511.3000000000002" height="50" fill="#f7f7f7"/>
<rect x="2763" y="1950.5" width="22" height="3" fill="#ee6c38"/>
<text x="2804.5" y="1960.6" font-size="24" fill="#343b40" stroke="#343b40" stroke-width="0.3">Kustomization/podinfo</text>
<text x="3229.5" y="1960.6" font-size="24" fill="#343b40" text-anchor="end" stroke="#343b40" stroke-width="0.3">1.071 s</text>
<rect x="2763" y="2000.5" width="22" height="3" fill="#e0302f"/>
<text x="2804.5" y="2010.6" font-size="24" fill="#343b40" stroke="#343b40" stroke-width="0.3">Kustomization/test</text>
<text x="3229.5" y="2010.6" font-size="24" fill="#343b40" text-anchor="end" stroke="#343b40" stroke-width="0.3">84 ms</text>
<rect x="23" y="2265" width="3254" height="590" fill="#ffffff" stroke="#d8dde3" stroke-width="2" rx="4"/>
<text x="1632" y="2304.5" font-size="28.6" fill="#343b40" text-anchor="middle" stroke="#343b40" stroke-width="1.0">Source acquisition duration</text>
<rect x="130" y="2355.7" width="2573" height="2" fill="#ebebeb"/><rect x="130" y="2443.2" width="2573" height="2" fill="#ebebeb"/><rect x="130" y="2530.7" width="2573" height="2" fill="#ebebeb"/><rect x="130" y="2618.2" width="2573" height="2" fill="#ebebeb"/><rect x="130" y="2705.7" width="2573" height="2" fill="#ebebeb"/><rect x="130" y="2793.2" width="2573" height="2" fill="#ebebeb"/><rect x="294.0" y="2356.7" width="2" height="437.5" fill="#e8e8e8"/><rect x="465.5" y="2356.7" width="2" height="437.5" fill="#e8e8e8"/><rect x="637.0" y="2356.7" width="2" height="437.5" fill="#e8e8e8"/><rect x="808.5" y="2356.7" width="2" height="437.5" fill="#e8e8e8"/><rect x="980.0" y="2356.7" width="2" height="437.5" fill="#e8e8e8"/><rect x="1151.5" y="2356.7" width="2" height="437.5" fill="#e8e8e8"/><rect x="1323.0" y="2356.7" width="2" height="437.5" fill="#e8e8e8"/><rect x="1494.5" y="2356.7" width="2" height="437.5" fill="#e8e8e8"/><rect x="1666.0" y="2356.7" width="2" height="437.5" fill="#e8e8e8"/><rect x="1837.5" y="2356.7" width="2" height="437.5" fill="#e8e8e8"/><rect x="2009.0" y="2356.7" width="2" height="437.5" fill="#e8e8e8"/><rect x="2180.5" y="2356.7" width="2" height="437.5" fill="#e8e8e8"/><rect x="2352.0" y="2356.7" width="2" height="437.5" fill="#e8e8e8"/><rect x="2523.5" y="2356.7" width="2" height="437.5" fill="#e8e8e8"/><rect x="2695.0" y="2356.7" width="2" height="437.5" fill="#e8e8e8"/>
<text x="119.5" y="2364.5" font-size="23" fill="#464c54" text-anchor="end">2.5 s</text>
<text x="119.5" y="2452.0" font-size="23" fill="#464c54" text-anchor="end">2.0 s</text>
<text x="119.5" y="2539.5" font-size="23" fill="#464c54" text-anchor="end">1.5 s</text>
<text x="119.5" y="2627.0" font-size="23" fill="#464c54" text-anchor="end">1.0 s</text>
<text x="119.5" y="2714.5" font-size="23" fill="#464c54" text-anchor="end">500 ms</text>
<text x="119.5" y="2802.0" font-size="23" fill="#464c54" text-anchor="end">0 s</text>
<text x="295.0" y="2827" font-size="23" fill="#464c54" text-anchor="middle">15:53</text>
<text x="466.5" y="2827" font-size="23" fill="#464c54" text-anchor="middle">15:54</text>
<text x="638.0" y="2827" font-size="23" fill="#464c54" text-anchor="middle">15:55</text>
<text x="809.5" y="2827" font-size="23" fill="#464c54" text-anchor="middle">15:56</text>
<text x="981.0" y="2827" font-size="23" fill="#464c54" text-anchor="middle">15:57</text>
<text x="1152.5" y="2827" font-size="23" fill="#464c54" text-anchor="middle">15:58</text>
<text x="1324.0" y="2827" font-size="23" fill="#464c54" text-anchor="middle">15:59</text>
<text x="1495.5" y="2827" font-size="23" fill="#464c54" text-anchor="middle">16:00</text>
<text x="1667.0" y="2827" font-size="23" fill="#464c54" text-anchor="middle">16:01</text>
<text x="1838.5" y="2827" font-size="23" fill="#464c54" text-anchor="middle">16:02</text>
<text x="2010.0" y="2827" font-size="23" fill="#464c54" text-anchor="middle">16:03</text>
<text x="2181.5" y="2827" font-size="23" fill="#464c54" text-anchor="middle">16:04</text>
<text x="2353.0" y="2827" font-size="23" fill="#464c54" text-anchor="middle">16:05</text>
<text x="2524.5" y="2827" font-size="23" fill="#464c54" text-anchor="middle">16:06</text>
<text x="2696.0" y="2827" font-size="23" fill="#464c54" text-anchor="middle">16:07</text>
<g clip-path="url(#clip1)"><polygon points="123.5,2794.2 123.5,2477.6 166.4,2477.6 209.2,2493.5 252.1,2493.5 295.0,2477.0 337.9,2477.0 380.8,2487.3 423.6,2487.3 466.5,2487.3 509.4,2546.7 552.2,2487.3 595.1,2487.3 638.0,2487.3 680.9,2471.4 723.8,2473.6 766.6,2473.6 809.5,2473.6 852.4,2454.0 895.2,2468.9 938.1,2468.9 981.0,2468.9 1023.9,2446.8 1066.8,2468.3 1109.6,2468.3 1152.5,2468.3 1195.4,2453.7 1238.2,2472.7 1281.1,2472.7 1324.0,2472.7 1366.9,2529.6 1409.8,2534.6 1452.6,2534.6 1495.5,2534.6 1538.4,2534.6 1581.2,2548.9 1624.1,2548.9 1667.0,2548.9 1709.9,2548.9 1752.8,2553.3 1795.6,2553.3 1838.5,2553.3 1881.4,2553.3 1924.2,2553.3 1967.1,2554.2 2010.0,2553.8 2052.9,2553.8 2095.8,2554.8 2138.6,2554.8 2181.5,2554.8 2224.4,2554.8 2267.2,2554.8 2310.1,2552.0 2353.0,2552.0 2395.9,2552.0 2438.8,2552.0 2481.6,2545.7 2524.5,2545.7 2567.4,2545.7 2610.2,2544.0 2653.1,2542.6 2696.0,2542.6 2696.0,2794.2" fill="#6da35c" fill-opacity="0.1"/><polygon points="123.5,2794.2 123.5,2616.1 166.4,2616.1 209.2,2617.3 252.1,2618.3 295.0,2619.0 337.9,2619.3 380.8,2619.6 423.6,2619.8 466.5,2620.0 509.4,2620.2 552.2,2620.5 595.1,2620.5 638.0,2622.6 680.9,2622.6 723.8,2626.7 766.6,2626.7 809.5,2628.0 852.4,2628.2 895.2,2628.2 938.1,2628.2 981.0,2626.7 1023.9,2626.7 1066.8,2627.6 1109.6,2627.6 1152.5,2628.0 1195.4,2628.0 1238.2,2628.0 1281.1,2626.7 1324.0,2627.6 1366.9,2627.0 1409.8,2627.3 1452.6,2626.7 1495.5,2625.1 1538.4,2625.4 1581.2,2626.4 1624.1,2625.8 1667.0,2625.1 1709.9,2624.5 1752.8,2620.5 1795.6,2621.7 1838.5,2622.6 1881.4,2621.7 1924.2,2621.4 1967.1,2621.0 2010.0,2621.3 2052.9,2621.3 2095.8,2620.3 2138.6,2616.8 2181.5,2615.0 2224.4,2616.4 2267.2,2615.0 2310.1,2616.0 2353.0,2617.1 2395.9,2617.1 2438.8,2615.4 2481.6,2616.0 2524.5,2615.4 2567.4,2615.7 2610.2,2619.6 2653.1,2620.6 2696.0,2618.9 2696.0,2794.2" fill="#e5a93a" fill-opacity="0.1"/><polygon points="1495.5,2794.2 1495.5,2734.6 1538.4,2734.6 1581.2,2734.6 1624.1,2734.6 1667.0,2734.6 1709.9,2734.6 1752.8,2734.6 1795.6,2734.6 1838.5,2734.6 1881.4,2734.6 1924.2,2734.6 1967.1,2734.6 2010.0,2734.6 2052.9,2734.6 2095.8,2734.6 2138.6,2734.6 2181.5,2734.6 2224.4,2734.6 2267.2,2734.6 2267.2,2794.2" fill="#4cc8d8" fill-opacity="0.1"/><polygon points="123.5,2794.2 123.5,2493.2 166.4,2494.1 209.2,2496.0 252.1,2496.0 295.0,2496.0 337.9,2496.3 380.8,2497.9 423.6,2497.9 466.5,2497.9 509.4,2500.0 552.2,2504.7 595.1,2504.7 638.0,2504.7 680.9,2504.7 723.8,2507.8 766.6,2507.8 809.5,2507.8 852.4,2513.4 895.2,2512.2 938.1,2512.2 981.0,2512.2 1023.9,2512.2 1066.8,2513.4 1109.6,2513.4 1152.5,2513.4 1195.4,2513.4 1238.2,2515.6 1281.1,2496.0 1324.0,2496.0 1366.9,2496.0 1409.8,2488.5 1452.6,2489.8 1495.5,2489.8 1538.4,2489.8 1581.2,2482.3 1624.1,2488.8 1667.0,2488.8 1709.9,2488.8 1752.8,2484.5 1795.6,2486.0 1838.5,2486.0 1881.4,2486.0 1924.2,2479.8 1967.1,2480.4 2010.0,2480.6 2052.9,2480.6 2095.8,2496.4 2138.6,2494.3 2181.5,2494.3 2224.4,2494.3 2267.2,2494.3 2310.1,2494.3 2353.0,2495.7 2395.9,2495.7 2438.8,2491.1 2481.6,2491.4 2524.5,2493.2 2567.4,2493.2 2610.2,2493.5 2653.1,2493.5 2696.0,2497.8 2696.0,2794.2" fill="#ee6c38" fill-opacity="0.1"/><polygon points="123.5,2794.2 123.5,2774.2 166.4,2772.9 209.2,2772.9 252.1,2772.9 295.0,2772.9 337.9,2776.3 380.8,2776.6 423.6,2776.6 466.5,2776.6 509.4,2777.9 552.2,2776.6 595.1,2776.6 638.0,2776.6 680.9,2776.6 723.8,2776.6 766.6,2776.6 809.5,2776.6 852.4,2776.6 895.2,2776.6 938.1,2776.6 981.0,2776.6 1023.9,2777.9 1066.8,2776.0 1109.6,2776.0 1152.5,2776.0 1195.4,2775.1 1238.2,2772.9 1281.1,2772.9 1324.0,2772.9 1366.9,2772.9 1409.8,2774.5 1452.6,2774.5 1495.5,2774.5 1538.4,2772.9 1581.2,2772.9 1624.1,2772.9 1667.0,2772.9 1709.9,2772.0 1752.8,2773.5 1795.6,2773.5 1838.5,2773.5 1881.4,2773.5 1924.2,2773.5 1967.1,2773.5 2010.0,2773.6 2052.9,2773.6 2095.8,2776.0 2138.6,2776.0 2181.5,2776.0 2224.4,2776.0 2267.2,2774.3 2310.1,2774.3 2353.0,2774.3 2395.9,2774.3 2438.8,2775.3 2481.6,2775.3 2524.5,2775.3 2567.4,2775.3 2610.2,2775.3 2653.1,2775.3 2696.0,2775.3 2696.0,2794.2" fill="#e0302f" fill-opacity="0.1"/><polygon points="123.5,2794.2 123.5,2747.1 166.4,2747.1 209.2,2747.1 252.1,2747.1 295.0,2747.1 337.9,2747.1 380.8,2747.1 423.6,2747.1 466.5,2747.1 466.5,2794.2" fill="#1e6fce" fill-opacity="0.1"/><polygon points="2524.5,2794.2 2524.5,2735.8 2567.4,2735.8 2610.2,2735.8 2653.1,2735.8 2696.0,2735.8 2696.0,2794.2" fill="#1e6fce" fill-opacity="0.1"/><polyline points="123.5,2477.6 166.4,2477.6 209.2,2493.5 252.1,2493.5 295.0,2477.0 337.9,2477.0 380.8,2487.3 423.6,2487.3 466.5,2487.3 509.4,2546.7 552.2,2487.3 595.1,2487.3 638.0,2487.3 680.9,2471.4 723.8,2473.6 766.6,2473.6 809.5,2473.6 852.4,2454.0 895.2,2468.9 938.1,2468.9 981.0,2468.9 1023.9,2446.8 1066.8,2468.3 1109.6,2468.3 1152.5,2468.3 1195.4,2453.7 1238.2,2472.7 1281.1,2472.7 1324.0,2472.7 1366.9,2529.6 1409.8,2534.6 1452.6,2534.6 1495.5,2534.6 1538.4,2534.6 1581.2,2548.9 1624.1,2548.9 1667.0,2548.9 1709.9,2548.9 1752.8,2553.3 1795.6,2553.3 1838.5,2553.3 1881.4,2553.3 1924.2,2553.3 1967.1,2554.2 2010.0,2553.8 2052.9,2553.8 2095.8,2554.8 2138.6,2554.8 2181.5,2554.8 2224.4,2554.8 2267.2,2554.8 2310.1,2552.0 2353.0,2552.0 2395.9,2552.0 2438.8,2552.0 2481.6,2545.7 2524.5,2545.7 2567.4,2545.7 2610.2,2544.0 2653.1,2542.6 2696.0,2542.6" fill="none" stroke="#6da35c" stroke-width="2" stroke-linejoin="round"/><polyline points="123.5,2616.1 166.4,2616.1 209.2,2617.3 252.1,2618.3 295.0,2619.0 337.9,2619.3 380.8,2619.6 423.6,2619.8 466.5,2620.0 509.4,2620.2 552.2,2620.5 595.1,2620.5 638.0,2622.6 680.9,2622.6 723.8,2626.7 766.6,2626.7 809.5,2628.0 852.4,2628.2 895.2,2628.2 938.1,2628.2 981.0,2626.7 1023.9,2626.7 1066.8,2627.6 1109.6,2627.6 1152.5,2628.0 1195.4,2628.0 1238.2,2628.0 1281.1,2626.7 1324.0,2627.6 1366.9,2627.0 1409.8,2627.3 1452.6,2626.7 1495.5,2625.1 1538.4,2625.4 1581.2,2626.4 1624.1,2625.8 1667.0,2625.1 1709.9,2624.5 1752.8,2620.5 1795.6,2621.7 1838.5,2622.6 1881.4,2621.7 1924.2,2621.4 1967.1,2621.0 2010.0,2621.3 2052.9,2621.3 2095.8,2620.3 2138.6,2616.8 2181.5,2615.0 2224.4,2616.4 2267.2,2615.0 2310.1,2616.0 2353.0,2617.1 2395.9,2617.1 2438.8,2615.4 2481.6,2616.0 2524.5,2615.4 2567.4,2615.7 2610.2,2619.6 2653.1,2620.6 2696.0,2618.9" fill="none" stroke="#e5a93a" stroke-width="2" stroke-linejoin="round"/><polyline points="1495.5,2734.6 1538.4,2734.6 1581.2,2734.6 1624.1,2734.6 1667.0,2734.6 1709.9,2734.6 1752.8,2734.6 1795.6,2734.6 1838.5,2734.6 1881.4,2734.6 1924.2,2734.6 1967.1,2734.6 2010.0,2734.6 2052.9,2734.6 2095.8,2734.6 2138.6,2734.6 2181.5,2734.6 2224.4,2734.6 2267.2,2734.6" fill="none" stroke="#5ec0d8" stroke-width="2" stroke-linejoin="round"/><polyline points="123.5,2493.2 166.4,2494.1 209.2,2496.0 252.1,2496.0 295.0,2496.0 337.9,2496.3 380.8,2497.9 423.6,2497.9 466.5,2497.9 509.4,2500.0 552.2,2504.7 595.1,2504.7 638.0,2504.7 680.9,2504.7 723.8,2507.8 766.6,2507.8 809.5,2507.8 852.4,2513.4 895.2,2512.2 938.1,2512.2 981.0,2512.2 1023.9,2512.2 1066.8,2513.4 1109.6,2513.4 1152.5,2513.4 1195.4,2513.4 1238.2,2515.6 1281.1,2496.0 1324.0,2496.0 1366.9,2496.0 1409.8,2488.5 1452.6,2489.8 1495.5,2489.8 1538.4,2489.8 1581.2,2482.3 1624.1,2488.8 1667.0,2488.8 1709.9,2488.8 1752.8,2484.5 1795.6,2486.0 1838.5,2486.0 1881.4,2486.0 1924.2,2479.8 1967.1,2480.4 2010.0,2480.6 2052.9,2480.6 2095.8,2496.4 2138.6,2494.3 2181.5,2494.3 2224.4,2494.3 2267.2,2494.3 2310.1,2494.3 2353.0,2495.7 2395.9,2495.7 2438.8,2491.1 2481.6,2491.4 2524.5,2493.2 2567.4,2493.2 2610.2,2493.5 2653.1,2493.5 2696.0,2497.8" fill="none" stroke="#ee6c38" stroke-width="2" stroke-linejoin="round"/><polyline points="123.5,2774.2 166.4,2772.9 209.2,2772.9 252.1,2772.9 295.0,2772.9 337.9,2776.3 380.8,2776.6 423.6,2776.6 466.5,2776.6 509.4,2777.9 552.2,2776.6 595.1,2776.6 638.0,2776.6 680.9,2776.6 723.8,2776.6 766.6,2776.6 809.5,2776.6 852.4,2776.6 895.2,2776.6 938.1,2776.6 981.0,2776.6 1023.9,2777.9 1066.8,2776.0 1109.6,2776.0 1152.5,2776.0 1195.4,2775.1 1238.2,2772.9 1281.1,2772.9 1324.0,2772.9 1366.9,2772.9 1409.8,2774.5 1452.6,2774.5 1495.5,2774.5 1538.4,2772.9 1581.2,2772.9 1624.1,2772.9 1667.0,2772.9 1709.9,2772.0 1752.8,2773.5 1795.6,2773.5 1838.5,2773.5 1881.4,2773.5 1924.2,2773.5 1967.1,2773.5 2010.0,2773.6 2052.9,2773.6 2095.8,2776.0 2138.6,2776.0 2181.5,2776.0 2224.4,2776.0 2267.2,2774.3 2310.1,2774.3 2353.0,2774.3 2395.9,2774.3 2438.8,2775.3 2481.6,2775.3 2524.5,2775.3 2567.4,2775.3 2610.2,2775.3 2653.1,2775.3 2696.0,2775.3" fill="none" stroke="#e0302f" stroke-width="2" stroke-linejoin="round"/><polyline points="123.5,2747.1 166.4,2747.1 209.2,2747.1 252.1,2747.1 295.0,2747.1 337.9,2747.1 380.8,2747.1 423.6,2747.1 466.5,2747.1" fill="none" stroke="#1e6fce" stroke-width="2" stroke-linejoin="round"/><polyline points="2524.5,2735.8 2567.4,2735.8 2610.2,2735.8 2653.1,2735.8 2696.0,2735.8" fill="none" stroke="#1e6fce" stroke-width="2" stroke-linejoin="round"/></g>
<text x="3229.5" y="2374.6" font-size="24.5" fill="#2b9be2" text-anchor="end" font-weight="700">avg</text>
<rect x="2771.3" y="2408.3" width="22" height="3" fill="#6da35c"/>
<text x="2812.8" y="2418.4" font-size="24" fill="#343b40" stroke="#343b40" stroke-width="0.3">GitRepository/monitoring</text>
<text x="3229.5" y="2418.4" font-size="24" fill="#343b40" text-anchor="end" stroke="#343b40" stroke-width="0.3">1.594 s</text>
<rect x="2746.3" y="2435.8" width="503.0" height="50" fill="#f7f7f7"/>
<rect x="2771.3" y="2458.3" width="22" height="3" fill="#e5a93a"/>
<text x="2812.8" y="2468.4" font-size="24" fill="#343b40" stroke="#343b40" stroke-width="0.3">GitRepository/podinfo</text>
<text x="3229.5" y="2468.4" font-size="24" fill="#343b40" text-anchor="end" stroke="#343b40" stroke-width="0.3">980 ms</text>
<rect x="2771.3" y="2508.3" width="22" height="3" fill="#5ec0d8"/>
<text x="2812.8" y="2518.4" font-size="24" fill="#343b40" stroke="#343b40" stroke-width="0.3">GitRepository/test2</text>
<text x="3229.5" y="2518.4" font-size="24" fill="#343b40" text-anchor="end" stroke="#343b40" stroke-width="0.3">338 ms</text>
<rect x="2746.3" y="2535.8" width="503.0" height="50" fill="#f7f7f7"/>
<rect x="2771.3" y="2558.3" width="22" height="3" fill="#ee6c38"/>
<text x="2812.8" y="2568.4" font-size="24" fill="#343b40" stroke="#343b40" stroke-width="0.3">HelmRepository/bitnami</text>
<text x="3229.5" y="2568.4" font-size="24" fill="#343b40" text-anchor="end" stroke="#343b40" stroke-width="0.3">1.695 s</text>
<rect x="2771.3" y="2608.3" width="22" height="3" fill="#e0302f"/>
<text x="2812.8" y="2618.4" font-size="24" fill="#343b40" stroke="#343b40" stroke-width="0.3">HelmRepository/minio</text>
<text x="3229.5" y="2618.4" font-size="24" fill="#343b40" text-anchor="end" stroke="#343b40" stroke-width="0.3">108 ms</text>
<rect x="2746.3" y="2635.8" width="503.0" height="50" fill="#f7f7f7"/>
<rect x="2771.3" y="2658.3" width="22" height="3" fill="#1e6fce"/>
<text x="2812.8" y="2668.4" font-size="24" fill="#343b40" stroke="#343b40" stroke-width="0.3">HelmRepository/test</text>
<text x="3229.5" y="2668.4" font-size="24" fill="#343b40" text-anchor="end" stroke="#343b40" stroke-width="0.3">289 ms</text>
</svg></body></html>
